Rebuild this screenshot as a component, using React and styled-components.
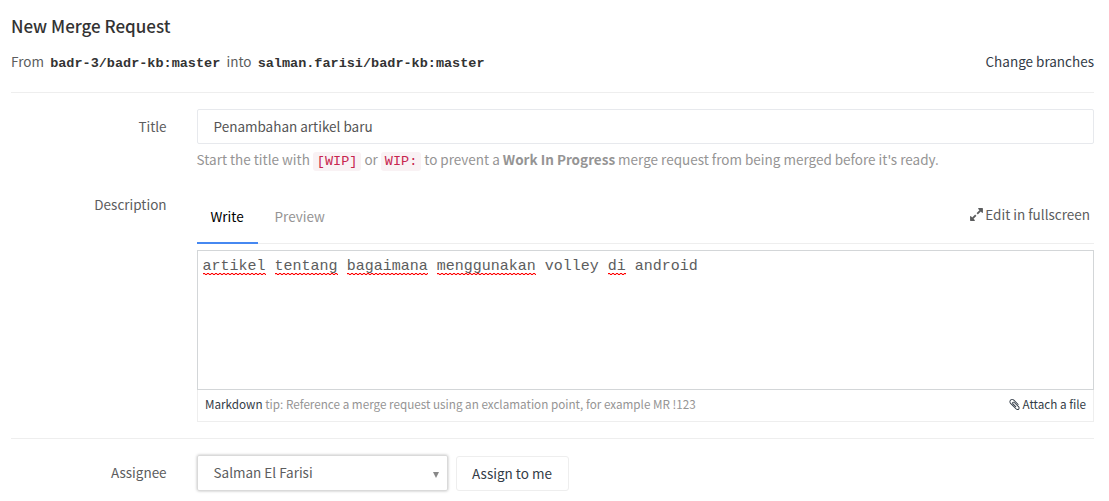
import React from 'react';
import styled, { createGlobalStyle } from 'styled-components';

const sans = `"Source Sans Pro", "Noto Sans CJK SC", "Noto Sans", sans-serif`;
const mono = `"Liberation Mono", monospace`;

const GlobalStyle = createGlobalStyle`
  * { box-sizing: border-box; }
  body {
    margin: 0;
    background: #fff;
    color: #5c5d5e;
    font-family: ${sans};
    font-size: 13.5px;
    line-height: 20px;
    overflow: hidden;
  }
`;

const Page = styled.main`
  width: 1109px;
  height: 501px;
  padding: 15px 15px 0 11px;
  overflow: hidden;
`;

const Heading = styled.h3`
  margin: 0;
  font-size: 17px;
  line-height: 22px;
  font-weight: 500;
  color: #333;
`;

const BranchBar = styled.div`
  display: flex;
  justify-content: space-between;
  align-items: center;
  height: 20px;
  margin-top: 15px;
`;

const Branches = styled.div`
  display: flex;
  align-items: baseline;
  gap: 6.2px;
`;

const BranchName = styled.strong`
  font: bold 13.5px/18px ${mono};
  color: #333;
`;

const TextLink = styled.a`
  color: ${(p) => p.$color || '#333c47'};
  white-space: nowrap;
`;

const ChangeLink = styled(TextLink)`
  padding-bottom: 2px;
`;

const Rule = styled.hr`
  height: 1px;
  border: 0;
  margin: ${(p) => p.$top}px 0 16px;
  background: #eee;
`;

const FormRow = styled.div`
  display: grid;
  grid-template-columns: 155.6px 897px;
  column-gap: 30.4px;
  margin-top: ${(p) => p.$top || 0}px;
`;

const Label = styled.label`
  padding-top: ${(p) => p.$offset}px;
  text-align: right;
`;

const TitleField = styled.div`
  height: 35px;
  padding: 6px 15.5px;
  border: 1px solid #e7e9ed;
  border-radius: 2px;
  color: #555;
`;

const Hint = styled.p`
  margin: 5px 0 0 -0.4px;
  height: 21px;
  color: #959494;
  white-space: nowrap;
`;

const Code = styled.code`
  padding: 2px 4px;
  border-radius: 3px;
  background: #f9f2f4;
  color: #c7254e;
  font: 13.5px/15px ${mono};
`;

const EditorHead = styled.div`
  display: flex;
  justify-content: space-between;
  height: 53px;
  border-bottom: 1px solid #eee;
`;

const Tabs = styled.div`
  display: flex;
`;

const Tab = styled.div`
  height: 53px;
  padding: 15px 14px 0 13.5px;
  margin-right: 3.4px;
  color: ${(p) => (p.$active ? '#000' : '#959494')};
  border-bottom: ${(p) => (p.$active ? '2px solid #4688f1' : '0')};
`;

const Fullscreen = styled.div`
  display: flex;
  align-items: center;
  gap: 1.5px;
  height: 20px;
  margin: 13px 4px 0 0;
`;

const TextArea = styled.div`
  height: 140px;
  margin-top: 6px;
  padding: 6px 4.6px;
  border: 1px solid #d3d6d8;
  font: 15px/20px ${mono};
  color: #5c5d5e;
  white-space: pre;
`;

const Misspelled = styled.span`
  background:
    linear-gradient(90deg, #f00 2px, #ffc9c9 2px) 0 calc(100% - 1px) / 4px 1px repeat-x,
    linear-gradient(90deg, #ffc9c9 2px, #f00 2px) 0 100% / 4px 1px repeat-x;
`;

const EditorFoot = styled.div`
  display: flex;
  justify-content: space-between;
  height: 32px;
  padding: 4px 7px 0;
  border: 1px solid #eee;
  border-top: 0;
  font-size: 11.7px;
  color: #959494;
`;

const Attach = styled.div`
  display: flex;
  align-items: center;
  gap: 1.5px;
  height: 20px;
  color: #333c47;
`;

const AssigneeControls = styled.div`
  display: flex;
  gap: 8px;
`;

const Select = styled.div`
  display: flex;
  justify-content: space-between;
  align-items: center;
  width: 251px;
  height: 36px;
  padding: 0 8px 2px 15.5px;
  border: 1px solid #dadada;
  border-radius: 2px;
  box-shadow: 0 0 3px rgba(0, 0, 0, 0.28);
`;

const Caret = styled.span`
  margin-top: 5px;
  border: 3px solid transparent;
  border-top: 6px solid #888;
  border-bottom: 0;
`;

const Button = styled.button`
  width: 113px;
  height: 35px;
  margin-top: 1px;
  padding: 0 1px 2px 0;
  border: 1px solid #eee;
  border-radius: 3px;
  background: #fff;
  color: #333c47;
  font: inherit;
`;

const ExpandIcon = () => (
  <svg width="15" height="15" viewBox="0 0 1792 1792" fill="#5c5d5e">
    <path d="M883 1056q0 13-10 23l-332 332 144 144q19 19 19 45t-19 45-45 19h-448q-26 0-45-19t-19-45v-448q0-26 19-45t45-19 45 19l144 144 332-332q10-10 23-10t23 10l114 114q10 10 10 23zm781-864v448q0 26-19 45t-45 19-45-19l-144-144-332 332q-10 10-23 10t-23-10l-114-114q-10-10-10-23t10-23l332-332-144-144q-19-19-19-45t19-45 45-19h448q26 0 45 19t19 45z" />
  </svg>
);

const ClipIcon = () => (
  <svg width="13" height="13" viewBox="0 0 1792 1792" fill="#333c47">
    <path d="M1596 1385q0 117-79 196t-196 79q-135 0-235-100l-777-776q-113-115-113-271 0-159 110-270t269-111q158 0 273 113l605 606q10 10 10 22 0 16-30.5 46.500t-46.500 30.500q-13 0-23-10l-606-607q-79-77-181-77-106 0-179 75t-73 181q0 105 76 181l776 777q63 63 145 63 64 0 106-42t42-106q0-82-63-145l-581-581q-26-24-60-24-29 0-48 19t-19 48q0 32 25 59l410 410q10 10 10 22 0 16-31 47t-47 31q-12 0-22-10l-410-410q-63-61-63-149 0-82 57-139t139-57q88 0 149 63l581 581q100 98 100 235z" />
  </svg>
);

export default function App() {
  return (
    <>
      <GlobalStyle />
      <Page>
        <Heading>New Merge Request</Heading>
        <BranchBar>
          <Branches>
            <span>From</span>
            <BranchName>badr-3/badr-kb:master</BranchName>
            <span>into</span>
            <BranchName>salman.farisi/badr-kb:master</BranchName>
          </Branches>
          <ChangeLink>Change branches</ChangeLink>
        </BranchBar>
        <Rule $top={20} />
        <FormRow>
          <Label $offset={7}>Title</Label>
          <div>
            <TitleField>Penambahan artikel baru</TitleField>
            <Hint>
              Start the title with <Code>[WIP]</Code> or <Code>WIP:</Code> to prevent a{' '}
              <b>Work In Progress</b> merge request from being merged before it's ready.
            </Hint>
          </div>
        </FormRow>
        <FormRow $top={21}>
          <Label $offset={3}>Description</Label>
          <div>
            <EditorHead>
              <Tabs>
                <Tab $active>Write</Tab>
                <Tab>Preview</Tab>
              </Tabs>
              <Fullscreen>
                <ExpandIcon />
                <TextLink $color="#5c5d5e">Edit in fullscreen</TextLink>
              </Fullscreen>
            </EditorHead>
            <TextArea>
              <Misspelled>artikel</Misspelled> <Misspelled>tentang</Misspelled>{' '}
              <Misspelled>bagaimana</Misspelled> <Misspelled>menggunakan</Misspelled> volley{' '}
              <Misspelled>di</Misspelled> android
            </TextArea>
            <EditorFoot>
              <span>
                <TextLink>Markdown</TextLink> tip: Reference a merge request using an exclamation
                point, for example MR !123
              </span>
              <Attach>
                <ClipIcon />
                <span>Attach a file</span>
              </Attach>
            </EditorFoot>
          </div>
        </FormRow>
        <Rule $top={16} />
        <FormRow>
          <Label $offset={7}>Assignee</Label>
          <AssigneeControls>
            <Select>
              <span>Salman El Farisi</span>
              <Caret />
            </Select>
            <Button>Assign to me</Button>
          </AssigneeControls>
        </FormRow>
      </Page>
    </>
  );
}
